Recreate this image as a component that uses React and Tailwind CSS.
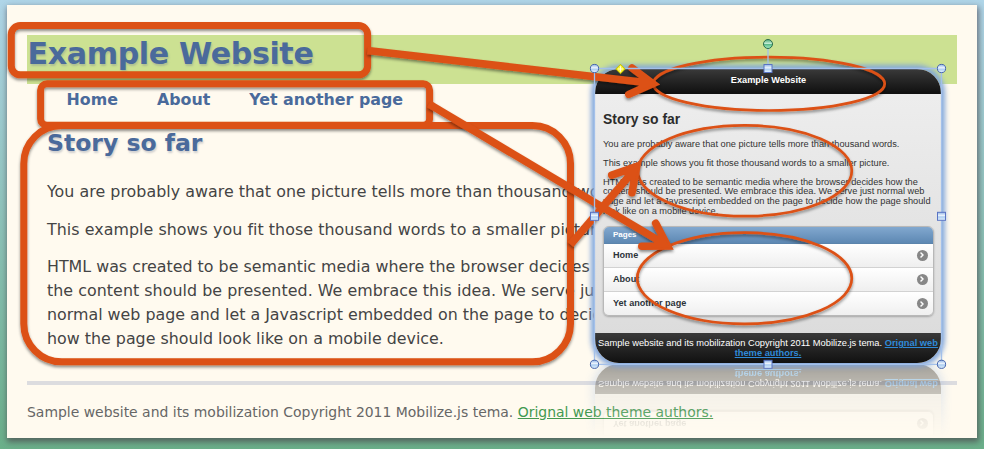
import React from "react";
import { ChevronRight } from "lucide-react";

const ORANGE = "#dc5116";

function PhoneRow({ label, last }) {
  return (
    <div
      className={
        "flex h-[24px] items-center justify-between bg-gradient-to-b from-white to-[#efefef] pl-[9.5px] pr-[5.5px] " +
        (last ? "" : "border-b border-[#d2d2d2]")
      }
    >
      <span className="pt-[1px] text-[9.1px] font-bold text-[#2c3339]">{label}</span>
      <span className="flex size-[11px] items-center justify-center rounded-full bg-[#878787]">
        <ChevronRight className="size-[8px] text-white" strokeWidth={4.5} />
      </span>
    </div>
  );
}

function Phone() {
  return (
    <div className="flex h-[294px] w-[346px] flex-col overflow-hidden rounded-[24px] bg-gradient-to-b from-[#efefef] to-[#dadada] font-['Liberation_Sans',Arial,sans-serif] whitespace-nowrap">
      <div className="flex h-[24.5px] shrink-0 items-center justify-center border-b border-[#111] bg-gradient-to-b from-[#3a3a3a] to-[#111] pl-[1px] text-[9.2px] font-bold text-white">
        Example Website
      </div>
      <div className="h-[132px] shrink-0 px-[8px] pt-[16px] text-[9.23px] leading-[9.7px] text-[#333]">
        <h2 className="mb-[12px] text-[13.9px] leading-[18px] font-bold text-[#2b2b2b]">Story so far</h2>
        <p className="mb-[9.3px]">You are probably aware that one picture tells more than thousand words.</p>
        <p className="mb-[9.3px]">This example shows you fit those thousand words to a smaller picture.</p>
        <p>
          HTML was created to be semantic media where the browser decides how the
          <br />
          content should be presented. We embrace this idea. We serve just normal web
          <br />
          page and let a Javascript embedded on the page to decide how the page should
          <br />
          look like on a mobile device.
        </p>
      </div>
      <div className="mr-[7px] ml-[7.5px] h-[90px] overflow-hidden rounded-[6px] border border-[#b8b8b8] shadow-[0_1px_2px_rgba(0,0,0,0.25)]">
        <div className="flex h-[17px] items-center border-b border-[#5b84ac] bg-gradient-to-b from-[#82a8cf] to-[#5d88b3] pl-[9.5px] text-[8px] font-bold text-white">
          Pages
        </div>
        <PhoneRow label="Home" />
        <PhoneRow label="About" />
        <PhoneRow label="Yet another page" last />
      </div>
      <div className="mt-auto h-[30px] shrink-0 bg-gradient-to-b from-[#3a3a3a] to-[#111] pt-[6px] text-center text-[9.3px] leading-[9.7px] text-white">
        Sample website and its mobilization Copyright 2011 Mobilize.js tema.{" "}
        <span className="font-bold text-[#2f8ad8] underline">
          Orignal web
          <br />
          theme authors.
        </span>
      </div>
    </div>
  );
}

function Annotations() {
  return (
    <svg className="pointer-events-none absolute inset-0" width="984" height="449" fill="none">
      <defs>
        <filter id="drop" filterUnits="userSpaceOnUse" x="0" y="0" width="984" height="449">
          <feDropShadow dx="0" dy="2" stdDeviation="1.6" floodColor="#000" floodOpacity="0.45" />
        </filter>
      </defs>
      <g stroke={ORANGE} strokeWidth="2.7">
        <ellipse cx="769" cy="83.8" rx="115.7" ry="26.7" filter="url(#drop)" />
        <ellipse cx="744.8" cy="170.8" rx="107" ry="45.4" filter="url(#drop)" />
        <ellipse cx="744.5" cy="278.3" rx="107.3" ry="45.6" filter="url(#drop)" />
      </g>
      <g stroke={ORANGE} strokeWidth="7" filter="url(#drop)">
        <rect x="23.8" y="125.5" width="546.7" height="236.3" rx="38" />
        <rect x="11.3" y="25.5" width="356.3" height="49.3" rx="9" />
        <rect x="40.6" y="83.8" width="389" height="41.5" rx="6.5" />
      </g>
      <g stroke={ORANGE} strokeWidth="7.6" strokeLinejoin="miter" filter="url(#drop)">
        <path d="M367.5 50.5 L652 83.3" />
        <path d="M632 68 L652.8 83.6 L628.8 94.4" strokeLinecap="round" />
        <path d="M429 104 L667 245.5" />
        <path d="M655.7 223.3 L667.5 246 L641.8 246.2" strokeLinecap="round" />
        <path d="M570.5 244.5 L636.5 167.5" />
        <path d="M611.8 175.2 L636.7 166.5 L632 192.7" strokeLinecap="round" />
      </g>
      <g fill={ORANGE}>
        <path d="M640 74 L656 84 L638 91 Z" />
        <path d="M661 232 L670 247.5 L651 247 Z" />
        <path d="M620 172 L639 164 L634.5 183 Z" />
      </g>
    </svg>
  );
}

const ROUND = [[594.5, 68.5], [941.5, 68.5], [594.5, 364.3], [941.5, 364.3]];
const SQUARE = [[768, 68.5], [594.5, 216.3], [941.5, 216.3], [768, 364.3]];

function Handles() {
  return (
    <svg className="pointer-events-none absolute inset-0" width="984" height="449" fill="none">
      <defs>
        <linearGradient id="blue" x1="0" y1="0" x2="0" y2="1">
          <stop offset="0" stopColor="#8fb4e6" />
          <stop offset="0.45" stopColor="#f4f9ff" />
          <stop offset="0.55" stopColor="#a9cbf0" />
          <stop offset="1" stopColor="#e6f4ff" />
        </linearGradient>
        <linearGradient id="green" x1="0" y1="0" x2="0" y2="1">
          <stop offset="0" stopColor="#4aa878" />
          <stop offset="0.45" stopColor="#c3ecd3" />
          <stop offset="0.55" stopColor="#5dbb8a" />
          <stop offset="1" stopColor="#a8efc8" />
        </linearGradient>
      </defs>
      <path d="M594.5 68.5 H941.5 V364.3 H594.5 Z M768 68.5 V44" stroke="#a3c0ea" strokeWidth="1.3" />
      {ROUND.map(([x, y]) => (
        <circle key={x + "-" + y} cx={x} cy={y} r="4.1" fill="url(#blue)" stroke="#4564ac" />
      ))}
      {SQUARE.map(([x, y]) => (
        <rect key={x + "-" + y} x={x - 4} y={y - 4} width="8" height="8" fill="url(#blue)" stroke="#5a74c4" />
      ))}
      <circle cx="768" cy="44" r="4.5" fill="url(#green)" stroke="#2c6b4c" />
      <path d="M620.5 64.3 L625.2 69 L620.5 73.7 L615.8 69 Z" fill="#f8f32a" stroke="#c4bc00" />
      <path d="M620.5 66.3 V71.7 M618 69 H623" stroke="#fffde0" strokeWidth="1.2" />
    </svg>
  );
}

export default function App() {
  return (
    <div className="relative h-[449px] w-[984px] overflow-hidden bg-gradient-to-b from-[#b0d6e9] to-[#6bb08a] pt-[5px] pl-[7px] font-['DejaVu_Sans',Verdana,sans-serif]">
      <div className="h-[433px] w-[970px] bg-[#fffaef] px-[20px] pt-[30px] whitespace-nowrap shadow-[1px_3px_6px_1px_rgba(70,60,70,0.65)]">
        <header className="flex h-[49px] items-start bg-[#cce192]">
          <h1 className="pl-[0.5px] text-[30.1px] leading-[37px] font-bold tracking-[-0.37px] text-[#4a6a9b] [text-shadow:1px_2px_2px_rgba(120,130,150,0.35)]">
            Example Website
          </h1>
        </header>
        <nav className="flex h-[32px] gap-[39px] pl-[39.5px] text-[15.85px] leading-[32px] font-bold text-[#4a6a9b]">
          <span>Home</span>
          <span>About</span>
          <span>Yet another page</span>
        </nav>
        <main className="h-[265px] pl-[20px] text-[15.86px] leading-[23.7px] text-[#444]">
          <h2 className="mb-[22px] pt-[12px] text-[23.5px] leading-[30px] font-bold text-[#4a6a9b] [text-shadow:1px_2px_2px_rgba(120,130,150,0.35)]">
            Story so far
          </h2>
          <p className="mb-[14px] tracking-[0.03px]">You are probably aware that one picture tells more than thousand words.</p>
          <p className="mb-[14px] tracking-[0.05px]">This example shows you fit those thousand words to a smaller picture.</p>
          <p>
            HTML was created to be semantic media where the browser decides how
            <br />
            <span className="tracking-[0.04px]">the content should be presented. We embrace this idea. We serve just</span>
            <br />
            normal web page and let a Javascript embedded on the page to decide
            <br />
            how the page should look like on a mobile device.
          </p>
        </main>
        <footer className="border-t-4 border-[#dcdcdf] pt-[17px] text-[13.94px] leading-[20px] text-[#666]">
          Sample website and its mobilization Copyright 2011 Mobilize.js tema.{" "}
          <span className="text-[#43994f] underline">Orignal web theme authors.</span>
        </footer>
      </div>

      <div className="absolute top-[364px] left-[580px] h-[74px] w-[376px] overflow-hidden px-[15px] opacity-38 [mask-image:linear-gradient(to_bottom,black_0%,rgba(0,0,0,0.75)_42%,rgba(0,0,0,0.2)_85%,transparent_100%)]">
        <div className="h-[294px] w-[346px] -scale-y-100 rounded-[24px] shadow-[0_0_8px_3px_rgba(105,150,220,0.6)]" aria-hidden="true">
          <Phone />
        </div>
      </div>
      <div className="absolute top-[69px] left-[595px] rounded-[24px] shadow-[0_0_5px_4px_rgba(125,163,219,0.95)]">
        <Phone />
      </div>
      <Annotations />
      <Handles />
    </div>
  );
}
